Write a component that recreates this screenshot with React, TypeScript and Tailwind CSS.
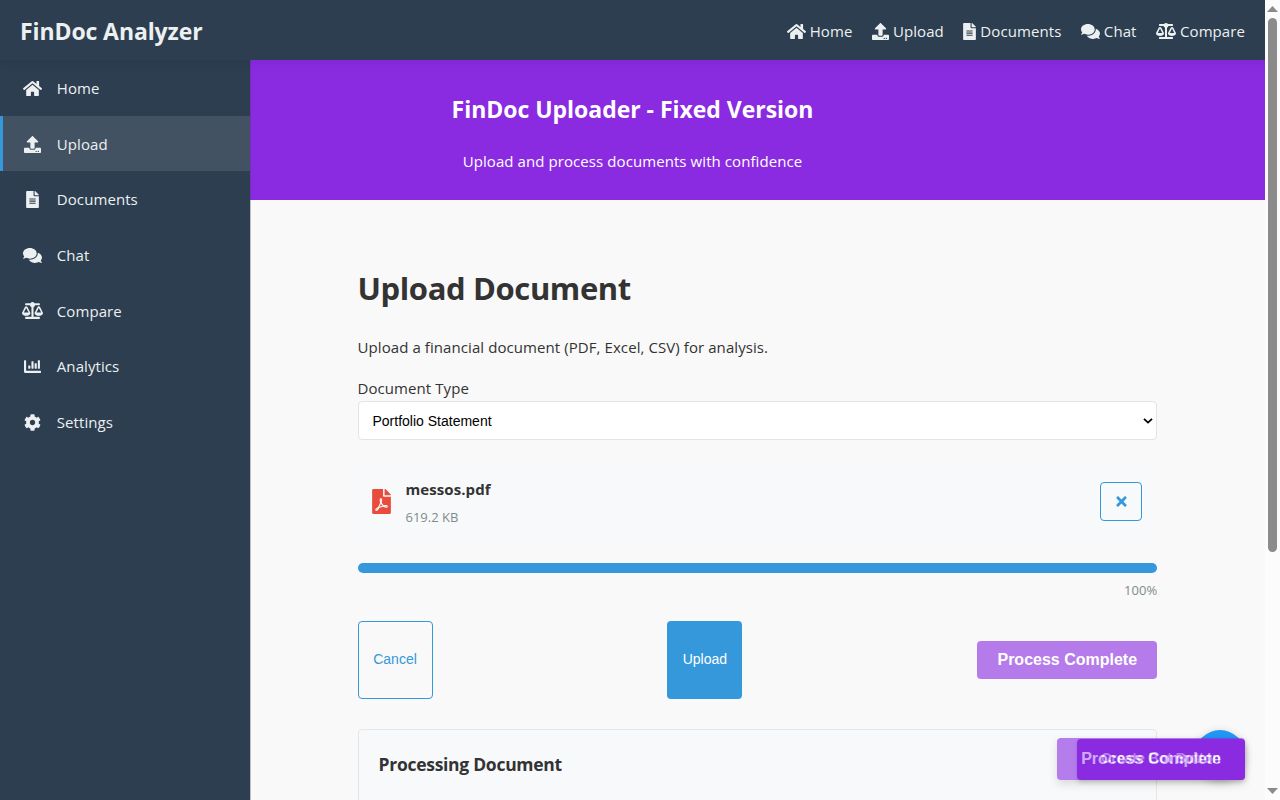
import type { ReactNode } from "react";
import { FaHome, FaUpload, FaFileAlt, FaComments, FaBalanceScale, FaChartBar, FaCog, FaFilePdf, FaTimes } from "react-icons/fa";

const side: { label: string; icon: ReactNode; active?: boolean }[] = [
  { label: "Home", icon: <FaHome className="text-[19px]" /> },
  { label: "Upload", icon: <FaUpload />, active: true },
  { label: "Documents", icon: <FaFileAlt /> },
  { label: "Chat", icon: <FaComments className="text-[19px]" /> },
  { label: "Compare", icon: <FaBalanceScale className="text-[21px]" /> },
  { label: "Analytics", icon: <FaChartBar /> },
  { label: "Settings", icon: <FaCog /> },
];

const nav: { label: string; icon: ReactNode }[] = [
  { label: "Home", icon: <FaHome className="text-[19px]" /> },
  { label: "Upload", icon: <FaUpload className="text-[17px]" /> },
  { label: "Documents", icon: <FaFileAlt className="w-[13px] text-[17px]" /> },
  { label: "Chat", icon: <FaComments className="text-[19px]" /> },
  { label: "Compare", icon: <FaBalanceScale className="text-[20px]" /> },
];

export default function App() {
  return (
    <div className="relative flex h-[800px] w-[1280px] overflow-hidden bg-[#f9f9f9] font-['Open_Sans',sans-serif] text-[15px] tracking-[0.08px] text-[#333]">
      <div className="flex w-[1265px] flex-col">
        <header className="z-10 flex h-[60px] shrink-0 items-center justify-between bg-[#2c3e50] px-5 pt-0.5 text-[#ecf0f1] shadow-[0_2px_10px_rgba(0,0,0,0.1)]">
          <div className="text-[23px] font-bold tracking-[-0.1px]">FinDoc Analyzer</div>
          <nav className="flex gap-[19.5px]">
            {nav.map((n) => (
              <a key={n.label} className="flex items-center gap-1">{n.icon}{n.label}</a>
            ))}
          </nav>
        </header>
        <div className="flex h-[740px]">
          <aside className="z-[1] w-[250px] shrink-0 bg-[#2c3e50] text-[#ecf0f1] shadow-[1px_0_0_rgba(44,62,80,0.3)]">
            {side.map((s) => (
              <div key={s.label} className={s.active ? "flex h-[55.6px] items-center border-l-[3px] border-[#3498db] bg-[#435262] pt-[1.4px] pl-[19px]" : "flex h-[55.6px] items-center pt-[1.4px] pl-[22px]"}>
                <span className="mr-[13.8px] flex w-[21px] justify-center text-[17px]">{s.icon}</span>{s.label}
              </div>
            ))}
          </aside>
          <main className="min-w-0 flex-1">
            <section className="flex h-[140px] flex-col items-center bg-[#8a2be2] pt-[31px] pr-[250px] text-white">
              <h2 className="text-[23px] leading-9 font-bold tracking-[-0.03px]">FinDoc Uploader - Fixed Version</h2>
              <p className="mt-[22px] leading-6">Upload and process documents with confidence</p>
            </section>
            <section className="ml-[107.5px] w-[799.8px] pt-[64px]">
              <h1 className="text-[31px] leading-[48px] font-bold tracking-[-0.38px]">Upload Document</h1>
              <p className="mt-[23px] leading-6">Upload a financial document (PDF, Excel, CSV) for analysis.</p>
              <div className="mt-[17px] leading-6">Document Type</div>
              <div className="mt-px flex h-[39px] items-center justify-between rounded border border-[#e2e4e6] bg-white pt-px pr-[3px] pl-[14px] font-['Liberation_Sans',sans-serif] text-[14px] tracking-normal text-black">
                Portfolio Statement
                <svg width="10" height="6" viewBox="0 0 10 6" fill="none" stroke="currentColor" strokeWidth="1.8"><path d="M1 .8 5 4.6 9 .8" /></svg>
              </div>
              <div className="mt-5 flex h-[83px] items-center rounded bg-[#f8f9fb] pr-[15px] pl-[14px]">
                <FaFilePdf className="w-[19px] text-[25px] text-[#e74c3c]" />
                <div className="ml-[15px] flex-1">
                  <div className="leading-6 font-bold">messos.pdf</div>
                  <div className="mt-[6px] text-[13px] leading-5 tracking-normal text-[#7f8c8d]">619.2 KB</div>
                </div>
                <button className="flex h-[39px] w-[42px] items-center justify-center rounded border border-[#3498db] pb-px text-[#3498db]"><FaTimes className="text-[15px]" /></button>
              </div>
              <div className="mt-5 h-[10px] rounded-full bg-[#3498db]" />
              <div className="mt-[7px] text-right text-[13px] leading-5 text-[#7f8c8d]">100%</div>
              <div className="mt-[21px] flex h-[78px] items-center justify-between font-['Liberation_Sans',sans-serif] text-[14px] tracking-normal">
                <button className="h-[78px] w-[75px] rounded border border-[#3498db] pb-0.5 text-[#3498db]">Cancel</button>
                <button className="h-[78px] w-[75px] rounded bg-[#3498db] pb-0.5 text-white">Upload</button>
                <button className="h-[38px] w-[180px] rounded bg-[#b57bea] text-[16px] font-bold text-white">Process Complete</button>
              </div>
              <div className="mt-[30px] h-[90px] rounded border border-[#e4e6e8] bg-[#f8f9fb] px-5 pt-5">
                <h3 className="text-[17.5px] leading-7 font-bold tracking-[-0.28px]">Processing Document</h3>
              </div>
            </section>
          </main>
        </div>
      </div>
      <div className="z-20 flex w-[15px] flex-col items-center justify-between bg-[#fcfcfc] py-[6px] text-[#8b8b8b]">
        <svg width="11" height="6" viewBox="0 0 11 6" fill="currentColor"><path d="M0 6 5.5 0 11 6z" /></svg>
        <div className="mt-[6px] mb-auto h-[534px] w-[9px] rounded-full bg-[#8b8b8b]" />
        <svg width="11" height="6" viewBox="0 0 11 6" fill="currentColor"><path d="M0 0 5.5 6 11 0z" /></svg>
      </div>
      <div className="absolute right-[35px] bottom-5 h-[50px] w-[50px] rounded-full bg-[#2196f3] shadow-[0_2px_10px_rgba(0,0,0,0.2)]" />
      <button className="absolute right-[35px] bottom-5 h-[41px] w-[168px] rounded bg-[#8a2be2] pb-0.5 font-['Liberation_Sans',sans-serif] text-[14px] font-bold tracking-normal text-white shadow-[0_2px_5px_rgba(0,0,0,0.2)]">Create Bot Button</button>
      <button className="absolute right-[35px] bottom-5 h-[42px] w-[188px] rounded bg-[#8a2be2] font-['Liberation_Sans',sans-serif] text-[16px] font-bold tracking-normal text-white opacity-60 shadow-[0_4px_8px_rgba(0,0,0,0.2)]">Process Complete</button>
    </div>
  );
}
